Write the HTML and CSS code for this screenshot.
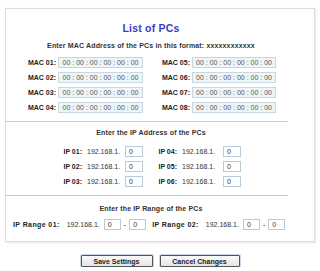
FILE: index.html
```html
<!DOCTYPE html>
<html lang="en">
<head>
  <meta charset="UTF-8" />
  <title>List of PCs</title>
  <link rel="stylesheet" href="styles.css">
</head>
<body>

  <div class="card">
    <h1>List of PCs</h1>

    <p class="hint first">Enter MAC Address of the PCs in this format: xxxxxxxxxxxx</p>

    <div class="mac-grid">
      <label>MAC 01:</label><div class="mac">00 : 00 : 00 : 00 : 00 : 00</div>
      <label>MAC 05:</label><div class="mac">00 : 00 : 00 : 00 : 00 : 00</div>
      <label>MAC 02:</label><div class="mac">00 : 00 : 00 : 00 : 00 : 00</div>
      <label>MAC 06:</label><div class="mac">00 : 00 : 00 : 00 : 00 : 00</div>
      <label>MAC 03:</label><div class="mac">00 : 00 : 00 : 00 : 00 : 00</div>
      <label>MAC 07:</label><div class="mac">00 : 00 : 00 : 00 : 00 : 00</div>
      <label>MAC 04:</label><div class="mac">00 : 00 : 00 : 00 : 00 : 00</div>
      <label>MAC 08:</label><div class="mac">00 : 00 : 00 : 00 : 00 : 00</div>
    </div>

    <hr>

    <p class="hint ip">Enter the IP Address of the PCs</p>

    <div class="ip-grid">
      <label>IP 01:</label><span class="net">192.168.1.</span><div class="box">0</div>
      <label>IP 04:</label><span class="net">192.168.1.</span><div class="box">0</div>
      <label>IP 02:</label><span class="net">192.168.1.</span><div class="box">0</div>
      <label>IP 05:</label><span class="net">192.168.1.</span><div class="box">0</div>
      <label>IP 03:</label><span class="net">192.168.1.</span><div class="box">0</div>
      <label>IP 06:</label><span class="net">192.168.1.</span><div class="box">0</div>
    </div>

    <hr>

    <p class="hint range">Enter the IP Range of the PCs</p>

    <div class="range-row">
      <label>IP Range 01:</label><span class="net">192.168.1.</span>
      <div class="box">0</div><span class="dash">-</span><div class="box">0</div>
      <label class="second">IP Range 02:</label><span class="net">192.168.1.</span>
      <div class="box">0</div><span class="dash">-</span><div class="box">0</div>
    </div>
  </div>

  <div class="actions">
    <button>Save Settings</button>
    <button>Cancel Changes</button>
  </div>

</body>
</html>
```

FILE: styles.css
```css
body {
  margin: 0;
  font-family: "Liberation Sans", Arial, sans-serif;
  font-size: 7px;
  line-height: 8px;
  color: #222;
  background: #fff;
}

.card {
  margin: 8px 5px 0 5px;
  height: 234px;
  border: 1px solid #dcdcdc;
  box-shadow: 1px 1px 2px #e6e6e6;
  box-sizing: border-box;
  padding: 13px 18px 0 0;
}

h1 {
  margin: 0;
  line-height: 12px;
  text-align: center;
  font-size: 10.5px;
  color: #3b3bc4;
  letter-spacing: 0.2px;
}

.hint {
  text-align: center;
  font-weight: bold;
  color: #333;
  letter-spacing: 0.15px;
}

.hint.first {
  margin: 8px 0 7px;
}

.hint.ip {
  margin: 7px 0 9px;
}

.hint.range {
  margin: 9px 0 6px;
}

label {
  font-weight: bold;
  color: #222;
  text-align: right;
  white-space: nowrap;
}

.mac-grid {
  display: grid;
  grid-template-columns: 31px 85px 45px 84px;
  column-gap: 2px;
  row-gap: 4px;
  align-items: center;
  margin-left: 19px;
}

.mac {
  height: 11px;
  line-height: 9px;
  border: 1px solid #c6d6e2;
  background: #eef5f9;
  color: #555;
  text-align: center;
  box-sizing: border-box;
  white-space: nowrap;
  overflow: hidden;
}

hr {
  border: 0;
  border-top: 1px solid #c8c8c8;
  margin: 8px 8px 0 0;
}

.ip-grid {
  display: grid;
  grid-template-columns: 22px 43px 18px 34px 46px 18px;
  row-gap: 4px;
  align-items: center;
  margin-left: 54px;
}

.net {
  color: #333;
  white-space: nowrap;
}

.ip-grid .net {
  padding-left: 5px;
}

.box {
  height: 11px;
  line-height: 9px;
  border: 1px solid #b8cbd9;
  background: #fff;
  padding-left: 3px;
  box-sizing: border-box;
  color: #333;
}

.range-row {
  display: flex;
  align-items: center;
  padding-left: 7px;
}

.range-row label {
  letter-spacing: 0.4px;
  margin-right: 7px;
}

.range-row .net {
  margin-right: 4px;
}

.range-row .box {
  width: 17px;
}

.range-row .second {
  margin-left: 6px;
}

.dash {
  margin: 0 3px;
}

.actions {
  display: flex;
  justify-content: center;
  gap: 7px;
  margin-top: 13px;
}

button {
  font-family: "Liberation Sans", Arial, sans-serif;
  font-size: 7px;
  font-weight: bold;
  color: #222;
  height: 12px;
  padding: 0;
  border: 1px solid #555;
  background: linear-gradient(#fafafa, #e4e4e4);
  box-shadow: 0 0 0 1px #c8d6e6;
  border-radius: 1px;
}

.actions button:first-child {
  width: 72px;
}

.actions button:last-child {
  width: 80px;
}
```
